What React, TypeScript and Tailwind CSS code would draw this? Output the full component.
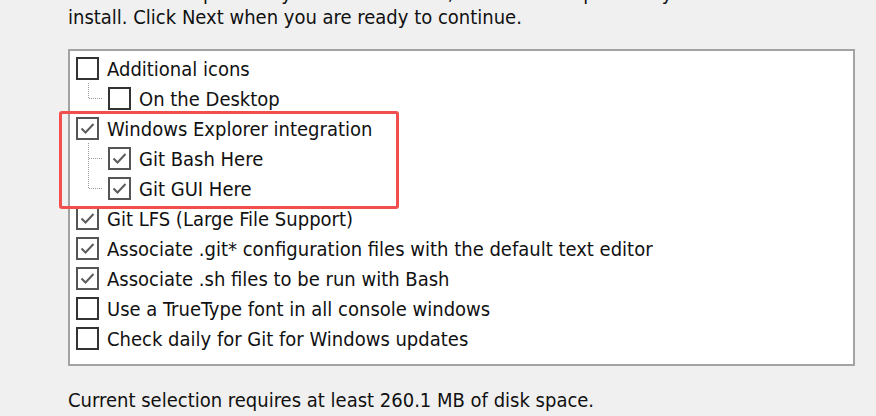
import React from "react";

type Item = { label: string; checked: boolean; level: 0 | 1; last?: boolean };

const items: Item[] = [
  { label: "Additional icons", checked: false, level: 0 },
  { label: "On the Desktop", checked: false, level: 1, last: true },
  { label: "Windows Explorer integration", checked: true, level: 0 },
  { label: "Git Bash Here", checked: true, level: 1 },
  { label: "Git GUI Here", checked: true, level: 1, last: true },
  { label: "Git LFS (Large File Support)", checked: true, level: 0 },
  { label: "Associate .git* configuration files with the default text editor", checked: true, level: 0 },
  { label: "Associate .sh files to be run with Bash", checked: true, level: 0 },
  { label: "Use a TrueType font in all console windows", checked: false, level: 0 },
  { label: "Check daily for Git for Windows updates", checked: false, level: 0 },
];

function Box({ checked }: { checked: boolean }) {
  return (
    <div
      className={
        checked
          ? "w-[23px] h-[23px] shrink-0 border-2 border-[#555555] bg-white flex items-center justify-center"
          : "w-[23px] h-[23px] shrink-0 border-2 border-[#333333] bg-white flex items-center justify-center"
      }
    >
      {checked && (
        <svg width="19" height="19" viewBox="0 0 19 19">
          <path d="M3.5 9.5 L7.5 13.5 L15.5 5" fill="none" stroke="#5c5c5c" strokeWidth="2" />
        </svg>
      )}
    </div>
  );
}

function Connector({ last }: { last?: boolean }) {
  return (
    <svg width="32" height="30" viewBox="0 0 32 30" className="shrink-0">
      <line x1="12.5" y1="0" x2="12.5" y2={last ? 15 : 30} stroke="#9a9a9a" strokeWidth="1" strokeDasharray="1 1" />
      <line x1="13" y1="15.5" x2="26" y2="15.5" stroke="#9a9a9a" strokeWidth="1" strokeDasharray="1 1" />
    </svg>
  );
}

export default function App() {
  return (
    <div
      className="relative flex flex-col h-[416px] w-[876px] overflow-hidden bg-[#f0f0f0] text-[20px] text-[#111111]"
      style={{ fontFamily: '"DejaVu Sans Condensed", "DejaVu Sans", sans-serif' }}
    >
      <p className="ml-[68px] mt-[-19px] leading-[24px] whitespace-nowrap">
        Select the components you want to install; clear the components you do not want to
        <br />
        install. Click Next when you are ready to continue.
      </p>

      <div className="ml-[68px] mt-[20px] w-[787px] h-[317px] shrink-0 border-2 border-[#a3a3a3] bg-white pt-[2px] pl-[6px]">
        {items.map((it) => (
          <div key={it.label} className="flex items-center h-[30px] whitespace-nowrap">
            {it.level === 1 && <Connector last={it.last} />}
            <Box checked={it.checked} />
            <span className="ml-[8px] leading-[24px] pt-[1px]">{it.label}</span>
          </div>
        ))}
      </div>

      <p className="ml-[68px] mt-[22px] leading-[24px] whitespace-nowrap">
        Current selection requires at least 260.1 MB of disk space.
      </p>

      <div className="absolute left-[59px] top-[111px] w-[340px] h-[98px] border-[3px] border-[#f34e4e] rounded-[3px]" />
    </div>
  );
}
